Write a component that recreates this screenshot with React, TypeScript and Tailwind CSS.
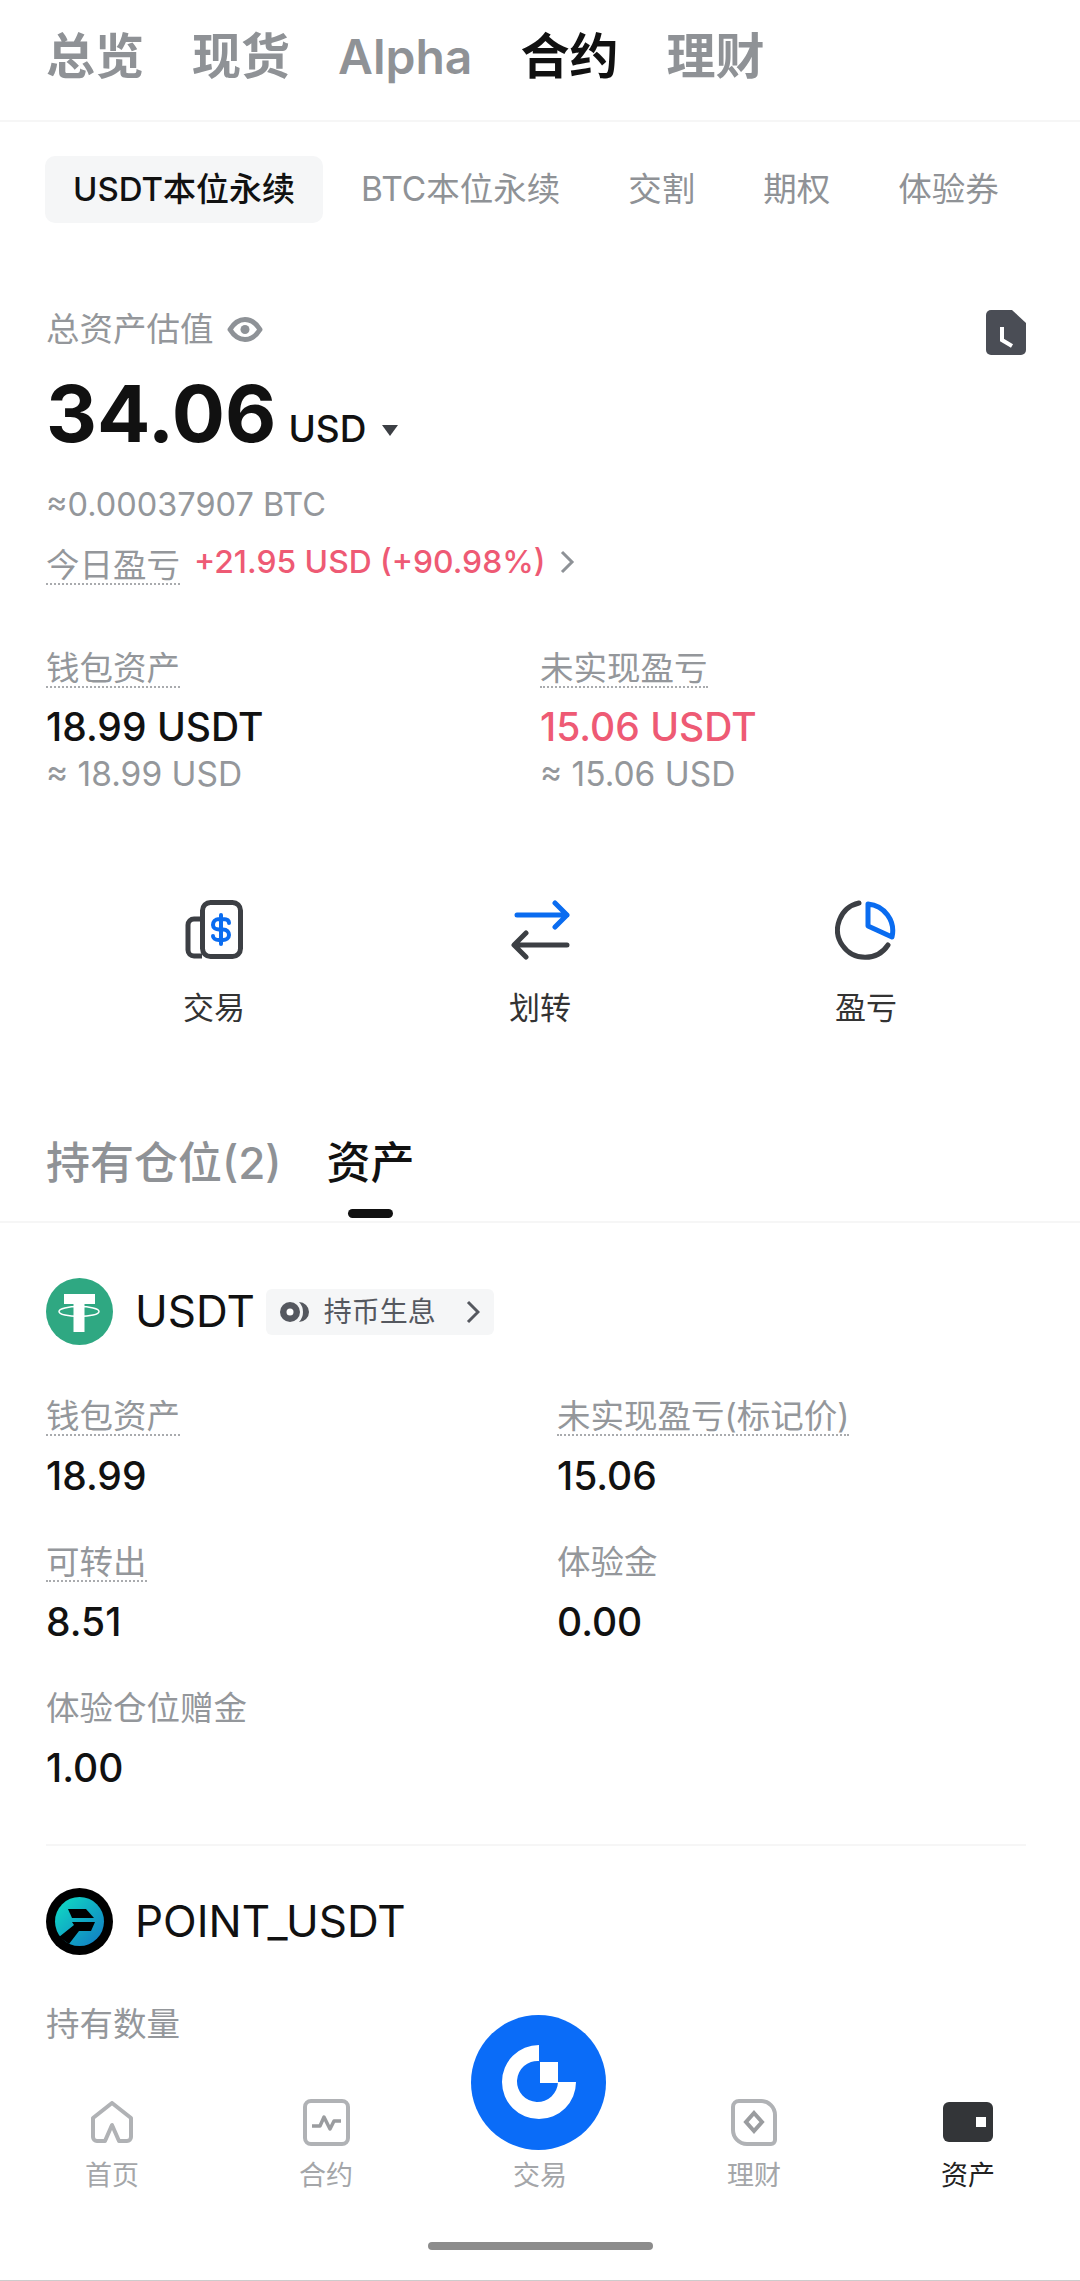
function Dotted({ children }: { children: string }) {
  return (
    <span className="block h-[38px] w-fit border-b-2 border-dotted border-[#a9abae] text-[33.5px] leading-[36px] text-[#94979b]">{children}</span>
  );
}

function Stat({ label, value, dotted = true }: { label: string; value: string; dotted?: boolean }) {
  return (
    <div className="flex flex-col">
      {dotted ? <Dotted>{label}</Dotted> : <span className="h-[38px] text-[33.5px] leading-[36px] text-[#94979b]">{label}</span>}
      <div className="mt-[18px] h-[44px] text-[39px] leading-[44px] font-medium text-[#111]">{value}</div>
    </div>
  );
}

function NavItem({ label, active, children }: { label: string; active?: boolean; children?: React.ReactNode }) {
  return (
    <div className="flex flex-col items-center">
      <div className="flex h-[48px] items-center justify-center">{children}</div>
      <div className={`mt-[13px] h-[34px] text-[27px] leading-[34px] ${active ? "text-[#222]" : "text-[#a4a6a9]"}`}>{label}</div>
    </div>
  );
}

export default function App() {
  return (
    <div className="relative flex h-[2281px] w-[1080px] flex-col overflow-hidden bg-white font-['Inter','Noto_Sans_CJK_SC',sans-serif] text-[#111]">
      <main className="min-h-0 flex-1 overflow-hidden">
        {/* top tabs */}
        <div className="flex h-[122px] items-center gap-[48px] border-b-2 border-[#f6f6f6] pb-[6px] pl-[46px] text-[49px] font-semibold text-[#8f9296]">
          <span>总览</span>
          <span>现货</span>
          <span className="text-[48px]">Alpha</span>
          <span className="text-[#111]">合约</span>
          <span>理财</span>
        </div>

        {/* product tabs */}
        <div className="mt-[34px] flex h-[67px] items-center pl-[45px] text-[33.5px] text-[#8f9296]">
          <span className="flex h-full items-center rounded-[10px] bg-[#f5f6f7] px-[28px] text-[33px] font-medium text-[#111]">USDT本位永续</span>
          <span className="ml-[4px] px-[34px]">BTC本位永续</span>
          <span className="px-[34px]">交割</span>
          <span className="px-[34px]">期权</span>
          <span className="px-[34px]">体验券</span>
        </div>

        {/* balance */}
        <div className="px-[46px]">
          <div className="mt-[86px] flex h-[40px] items-start justify-between pr-[8px]">
            <div className="flex h-[40px] items-center gap-[13px] text-[33.5px] text-[#94979b]">
              <span>总资产估值</span>
              <svg width="36" height="25" viewBox="0 0 36 25" fill="none">
                <path d="M18 2.500C24 2.500 29 6 33 12.500C29 19 24 22.500 18 22.500C12 22.500 7 19 3 12.500C7 6 12 2.500 18 2.500Z" stroke="#8e9297" strokeWidth="5" strokeLinejoin="round" />
                <circle cx="18" cy="12.500" r="4.500" fill="#8e9297" />
              </svg>
            </div>
            <svg className="mt-[1px]" width="40" height="45" viewBox="0 0 40 45">
              <path d="M5 0H26L40 13V40a5 5 0 0 1-5 5H5a5 5 0 0 1-5-5V5a5 5 0 0 1 5-5Z" fill="#4a4d55" />
              <path d="M16 17V30L26 36" fill="none" stroke="#fff" strokeWidth="4" />
            </svg>
          </div>

          <div className="mt-[21px] flex h-[86px] items-baseline">
            <span className="text-[79px] leading-[86px] font-bold">34.06</span>
            <span className="ml-[12px] text-[37px] font-medium">USD</span>
            <svg className="mb-[20px] ml-[16px] self-end" width="16" height="11" viewBox="0 0 16 11">
              <path d="M0 0H16L8 11Z" fill="#3c3f44" />
            </svg>
          </div>

          <div className="mt-[29px] h-[40px] text-[32.500px] leading-[40px] text-[#94979b]">≈0.00037907 BTC</div>

          <div className="mt-[22px] flex h-[38px] items-start">
            <Dotted>今日盈亏</Dotted>
            <span className="ml-[14px] text-[31.800px] leading-[30px] font-medium text-[#ee5a74]">+21.95 USD (+90.98%)</span>
            <svg className="mt-[3px] ml-[14px]" width="16" height="24" viewBox="0 0 16 24" fill="none">
              <path d="M3 2L13 12L3 22" stroke="#8e9297" strokeWidth="3" />
            </svg>
          </div>

          <div className="mt-[65px] grid grid-cols-[494px_1fr]">
            <div>
              <Dotted>钱包资产</Dotted>
              <div className="mt-[17px] h-[44px] text-[39px] leading-[44px] font-medium">18.99 USDT</div>
              <div className="mt-[5px] h-[40px] text-[33.500px] leading-[40px] text-[#94979b]">≈ 18.99 USD</div>
            </div>
            <div>
              <Dotted>未实现盈亏</Dotted>
              <div className="mt-[17px] h-[44px] text-[39px] leading-[44px] font-medium text-[#ee5a74]">15.06 USDT</div>
              <div className="mt-[5px] h-[40px] text-[33.500px] leading-[40px] text-[#94979b]">≈ 15.06 USD</div>
            </div>
          </div>
        </div>

        {/* actions */}
        <div className="mt-[106px] grid grid-cols-3 px-[51px] text-[31px] text-[#333]">
          <div className="flex flex-col items-center">
            <svg width="58" height="60" viewBox="0 0 58 60" fill="none">
              <rect x="17.500" y="2.500" width="38" height="54" rx="8" stroke="#3c3f44" strokeWidth="5" />
              <path d="M17 19H9a6 6 0 0 0-6 6V50a6 6 0 0 0 6 6H17" stroke="#3c3f44" strokeWidth="5" />
              <path d="M36 15V44M44 23C44 20 41 19 38 19H34C30 19 28 22 28 25C28 28 31 29.500 34 29.500H38C42 29.500 44 32 44 35C44 38 41 40 38 40H34C30 40 28 38 28 36" stroke="#0a6cf0" strokeWidth="4" strokeLinecap="round" />
            </svg>
            <span className="mt-[28px] leading-[40px]">交易</span>
          </div>
          <div className="flex flex-col items-center">
            <svg width="60" height="60" viewBox="0 0 60 60" fill="none" strokeWidth="5" strokeLinecap="round" strokeLinejoin="round">
              <path d="M7 15H57M45 3L57 15L45 27" stroke="#0a6cf0" />
              <path d="M57 45H5M16 33L4 45L16 57" stroke="#3c3f44" />
            </svg>
            <span className="mt-[28px] leading-[40px]">划转</span>
          </div>
          <div className="flex flex-col items-center">
            <svg width="62" height="60" viewBox="0 0 62 60" fill="none" strokeWidth="5" strokeLinejoin="round" strokeLinecap="round">
              <path d="M24 3A27.500 27.500 0 1 0 53 45" stroke="#3c3f44" />
              <path d="M33 4A27 27 0 0 1 57 37L33 26Z" stroke="#0a6cf0" />
            </svg>
            <span className="mt-[28px] leading-[40px]">盈亏</span>
          </div>
        </div>

        {/* positions / assets tabs */}
        <div className="mt-[105px] flex h-[90px] gap-[45px] border-b-2 border-[#f6f6f6] pl-[46px] text-[44px] font-medium">
          <span className="leading-[60px] text-[#8f9296]">持有仓位(2)</span>
          <div className="flex flex-col items-center">
            <span className="leading-[60px]">资产</span>
            <span className="mt-[16px] h-[9px] w-[45px] rounded-full bg-[#111]" />
          </div>
        </div>

        {/* USDT */}
        <div className="px-[46px]">
          <div className="mt-[55px] flex h-[67px] items-center">
            <svg width="67" height="67" viewBox="0 0 67 67">
              <circle cx="33.500" cy="33.500" r="33.500" fill="#2fa882" />
              <path d="M18 16H49V26H38.500V54H27.500V26H18Z" fill="#fff" />
              <ellipse cx="33" cy="33.500" rx="20" ry="5" fill="none" stroke="#fff" strokeWidth="1.500" />
            </svg>
            <span className="ml-[22px] text-[44px] leading-[67px]">USDT</span>
            <div className="ml-[11px] flex h-[46px] w-[228px] items-center rounded-[6px] bg-[#f5f6f7] pl-[14px] text-[#55585f]">
              <svg width="29" height="20" viewBox="0 0 29 20">
                <circle cx="10" cy="10" r="10" fill="#55585f" />
                <circle cx="10" cy="10" r="3.500" fill="#fff" />
                <path d="M19 0A10 10 0 0 1 19 20A14.500 14.500 0 0 0 19 0Z" fill="#55585f" />
              </svg>
              <span className="ml-[15px] text-[28px] leading-[46px]">持币生息</span>
              <svg className="ml-[30px]" width="14" height="24" viewBox="0 0 14 24" fill="none">
                <path d="M2 2L12 12L2 22" stroke="#55585f" strokeWidth="3" />
              </svg>
            </div>
          </div>

          <div className="mt-[53px] grid grid-cols-[511px_1fr] gap-y-[46px]">
            <Stat label="钱包资产" value="18.99" />
            <Stat label="未实现盈亏(标记价)" value="15.06" />
            <Stat label="可转出" value="8.51" />
            <Stat label="体验金" value="0.00" dotted={false} />
            <Stat label="体验仓位赠金" value="1.00" dotted={false} />
          </div>

          <div className="mt-[54px] h-[2px] w-[980px] bg-[#f6f6f6]" />

          {/* POINT_USDT */}
          <div className="mt-[42px] flex h-[67px] items-center">
            <svg width="67" height="67" viewBox="0 0 67 67">
              <defs>
                <linearGradient id="pt" x1="0" y1="0" x2="1" y2="1">
                  <stop offset="0" stopColor="#0fe0c4" />
                  <stop offset="1" stopColor="#1277c4" />
                </linearGradient>
              </defs>
              <circle cx="33.500" cy="33.500" r="33.500" fill="#000" />
              <circle cx="33.500" cy="33.500" r="24.500" fill="url(#pt)" />
              <path d="M22 21H40L48 30H26Z" fill="#000" />
              <path d="M26 34H49L45 43H33L23 56L13 49L28 37Z" fill="#000" />
            </svg>
            <span className="ml-[22px] text-[44px] leading-[67px]">POINT_USDT</span>
          </div>

          <div className="mt-[49px] text-[33.5px] leading-[40px] text-[#94979b]">持有数量</div>
        </div>
      </main>

      {/* bottom nav */}
      <nav className="relative h-[233px] shrink-0 border-b border-[#ccc] bg-white pt-[50px]">
        <div className="grid grid-cols-5 px-[5px]">
          <NavItem label="首页">
            <svg width="44" height="42" viewBox="0 0 44 42" fill="none">
              <path d="M3 17L22 2L41 17V36a4 4 0 0 1-4 4H29L22 24L15 40H7a4 4 0 0 1-4-4Z" stroke="#b0b2b5" strokeWidth="4" strokeLinejoin="round" />
            </svg>
          </NavItem>
          <NavItem label="合约">
            <svg width="47" height="47" viewBox="0 0 47 47" fill="none">
              <rect x="2" y="2" width="43" height="43" rx="6" stroke="#b0b2b5" strokeWidth="4" />
              <path d="M9 27H17L21 18L27 30L31 22H38" stroke="#9a9c9f" strokeWidth="3.500" strokeLinejoin="round" />
            </svg>
          </NavItem>
          <NavItem label="交易" />
          <NavItem label="理财">
            <svg width="46" height="47" viewBox="0 0 46 47" fill="none">
              <path d="M8 2H30a14 14 0 0 1 14 14V41a4 4 0 0 1-4 4H16a14 14 0 0 1-14-14V8a6 6 0 0 1 6-6Z" stroke="#b0b2b5" strokeWidth="4" />
              <path d="M23 14L31 23L23 32L15 23Z" stroke="#9a9c9f" strokeWidth="4" />
            </svg>
          </NavItem>
          <NavItem label="资产" active>
            <svg width="50" height="40" viewBox="0 0 50 40">
              <rect width="50" height="40" rx="6" fill="#333538" />
              <rect x="33" y="15" width="10" height="10" fill="#fff" />
            </svg>
          </NavItem>
        </div>

        <div className="mx-auto mt-[49px] h-[8px] w-[225px] rounded-full bg-[#8c8c8c]" />

        {/* center trade button */}
        <svg className="absolute top-[-33px] left-[471px]" width="135" height="135" viewBox="0 0 135 135">
          <circle cx="67.500" cy="67.500" r="67.500" fill="#0a6cf8" />
          <path d="M68 30A37 37 0 1 0 105 67H87A20.500 20.500 0 1 1 68 46Z" fill="#fff" />
          <rect x="69" y="47" width="18" height="21" fill="#fff" />
        </svg>
      </nav>
    </div>
  );
}
